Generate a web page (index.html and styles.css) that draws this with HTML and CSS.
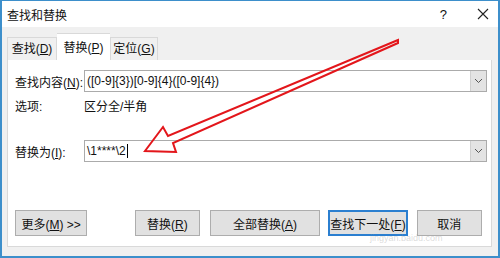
FILE: index.html
```html
<!DOCTYPE html>
<html lang="zh">
<head>
    <meta charset="UTF-8">
    <title>查找和替换</title>
    <link rel="stylesheet" href="styles.css">
</head>
<body>
    <div class="window">
        <div class="titlebar">
            <span class="title">查找和替换</span>
            <span class="help">?</span>
            <svg class="close" width="12" height="12" viewBox="0 0 12 12"><path d="M1 1L11 11M11 1L1 11" stroke="#222" stroke-width="1.1" fill="none"/></svg>
        </div>

        <div class="body">
            <div class="tabs">
                <div class="tab">查找(<u>D</u>)</div>
                <div class="tab active">替换(<u>P</u>)</div>
                <div class="tab">定位(<u>G</u>)</div>
            </div>

            <div class="panel">
                <div class="row">
                    <span class="label">查找内容(<u>N</u>):</span>
                    <div class="combo">
                        <span class="value">([0-9]{3})[0-9]{4}([0-9]{4})</span>
                        <span class="drop"><svg width="9" height="6" viewBox="0 0 9 6"><path d="M1 1L4.5 4.5L8 1" stroke="#555" stroke-width="1" fill="none"/></svg></span>
                    </div>
                </div>
                <div class="row options">
                    <span class="label">选项:</span>
                    <span>区分全/半角</span>
                </div>
                <div class="row replace">
                    <span class="label">替换为(<u>I</u>):</span>
                    <div class="combo">
                        <span class="value">\1****\2<span class="caret"></span></span>
                        <span class="drop"><svg width="9" height="6" viewBox="0 0 9 6"><path d="M1 1L4.5 4.5L8 1" stroke="#555" stroke-width="1" fill="none"/></svg></span>
                    </div>
                </div>

                <div class="buttons">
                    <button class="btn more">更多(<u>M</u>) &gt;&gt;</button>
                    <button class="btn b-replace">替换(<u>R</u>)</button>
                    <button class="btn b-all">全部替换(<u>A</u>)</button>
                    <button class="btn b-next default">查找下一处(<u>F</u>)</button>
                    <button class="btn b-cancel">取消</button>
                </div>
            </div>
        </div>

        <span class="watermark">jingyan.baidu.com</span>

        <svg class="arrow" width="500" height="258" viewBox="0 0 500 258">
            <polygon points="398,40 168,136 163,127 145,151 176,152 173,143 398,43" fill="none" stroke="#e3161b" stroke-width="2" stroke-linejoin="miter"/>
        </svg>
    </div>
</body>
</html>
```

FILE: styles.css
```css
body { margin: 0; font-family: "Liberation Sans", "Noto Sans CJK SC", sans-serif; font-size: 12px; color: #111; }
.window { position: relative; width: 500px; height: 258px; box-sizing: border-box; border: 2px solid #3d8fcb; border-top: 1px solid #3d8fcb; background: #f0f0f0; overflow: hidden; }

.titlebar { height: 26px; background: white; display: flex; align-items: center; padding-left: 5px; }
.title { flex: 1; }
.help { font-size: 13px; margin-right: 30px; }
.close { margin-right: 9px; }

.body { padding: 6px 0 0 5px; }
.tabs { display: flex; align-items: flex-end; height: 27px; }
.tab { height: 23px; line-height: 22px; border: 1px solid #d9d9d9; border-bottom: none; box-sizing: border-box; background: #f0f0f0; white-space: nowrap; text-align: center; }
.tab:first-child { width: 50px; }
.tab.active { height: 27px; line-height: 28px; background: white; width: 53px; border-left: none; border-right: none; }
.tab:last-child { width: 48px; }

.panel { width: 485px; height: 187px; box-sizing: border-box; background: white; border: 1px solid #d9d9d9; border-top: none; padding: 10px 0 0 7px; }
.row { display: flex; align-items: center; }
.label { width: 69px; white-space: nowrap; }
.options { margin-top: 5px; height: 17px; }
.replace { margin-top: 26px; }

.combo { width: 403px; height: 22px; box-sizing: border-box; border: 1px solid #ababab; display: flex; align-items: center; }
.value { flex: 1; padding-left: 2px; display: flex; align-items: center; }
.caret { display: inline-block; width: 1px; height: 14px; background: #000; margin-left: 1px; }
.drop { width: 16px; height: 20px; box-sizing: border-box; background: #e3e3e3; border-left: 1px solid #cfcfcf; display: flex; align-items: center; justify-content: center; }

.buttons { display: flex; margin-top: 48px; }
.btn { height: 26px; box-sizing: border-box; border: 1px solid #adadad; background: #e1e1e1; font-family: inherit; font-size: 12px; color: #111; padding: 0; margin-right: 9px; white-space: nowrap; }
.more { width: 73px; margin-right: 48px; }
.b-replace { width: 65px; margin-right: 10px; }
.b-all { width: 112px; margin-right: 8px; }
.b-next { width: 80px; }
.default { border: 2px solid #2b7fd0; }
.b-cancel { width: 66px; }

.watermark { position: absolute; left: 368px; top: 232px; font-size: 9px; color: rgba(150, 150, 150, 0.35); }
.arrow { position: absolute; left: -2px; top: -1px; pointer-events: none; }
```
